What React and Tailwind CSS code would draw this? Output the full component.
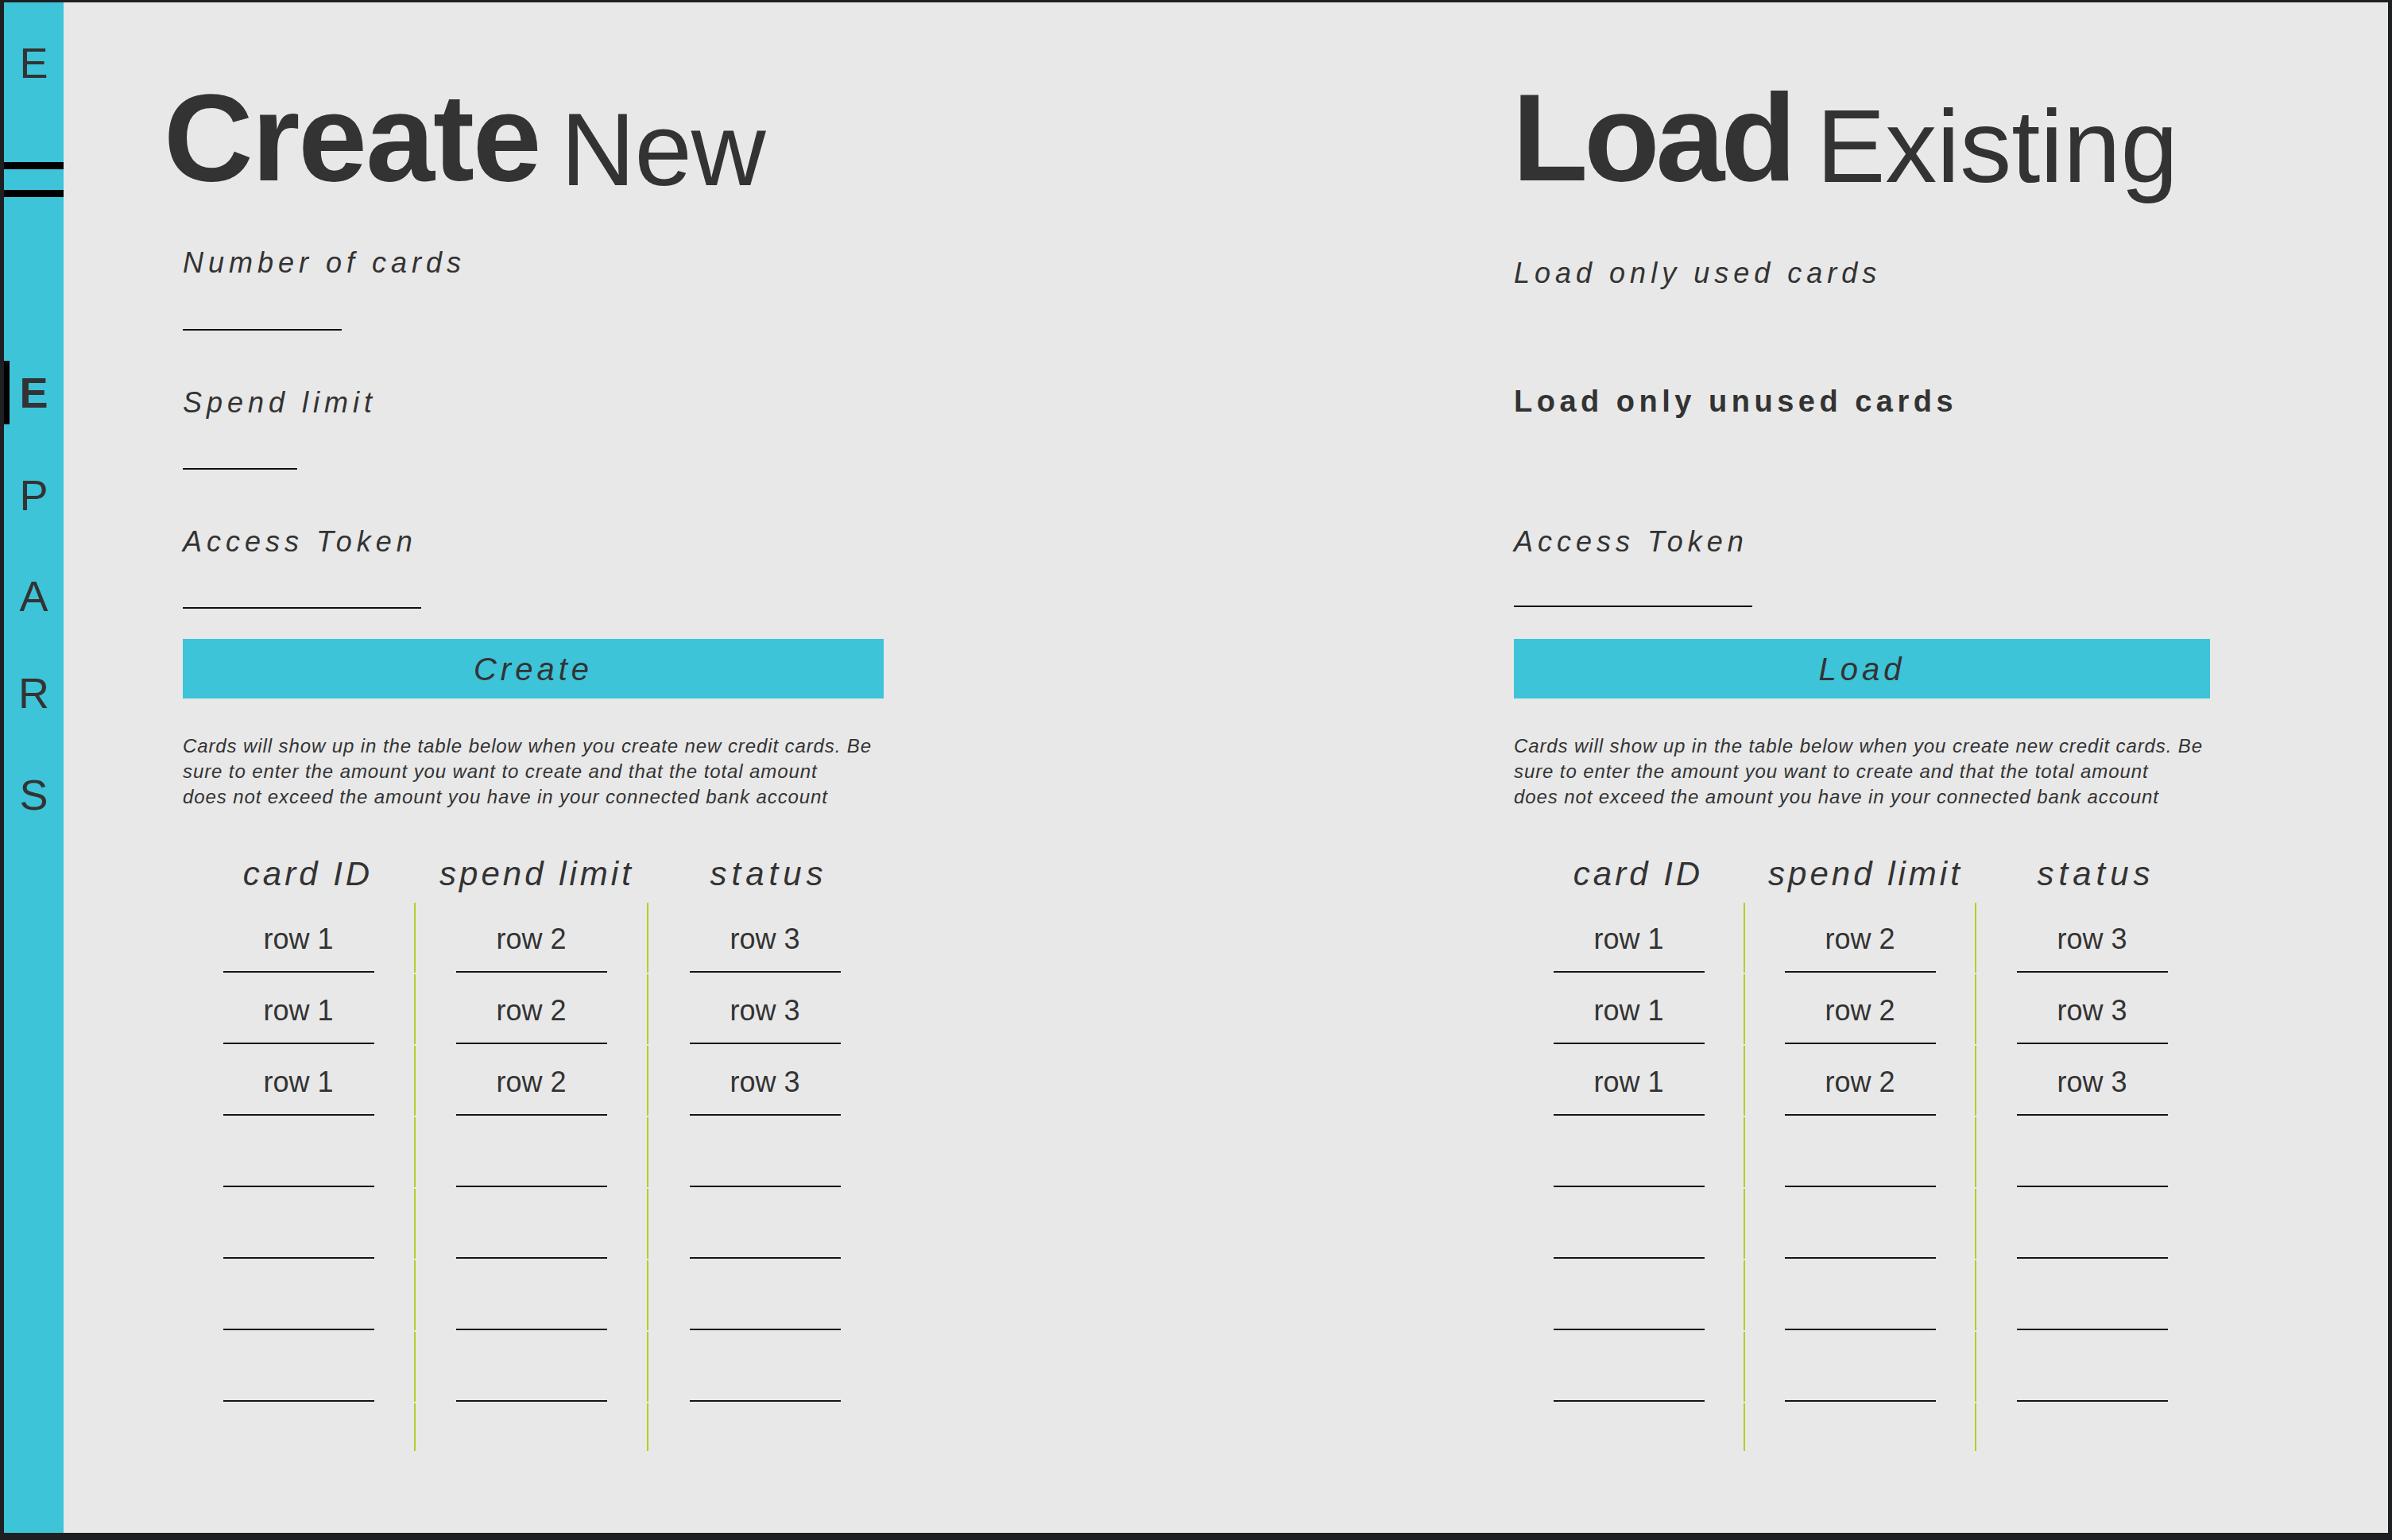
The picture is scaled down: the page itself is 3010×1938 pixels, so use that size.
import React from "react";

const HELP_LINES = [
  "Cards will show up in the table below when you create new credit cards. Be",
  "sure to enter the amount you want to create and that the total amount",
  "does not exceed the amount you have in your connected bank account",
];

const HEADERS = [
  { label: "card ID", cls: "pl-[22px] tracking-[4px]" },
  { label: "spend limit", cls: "pl-[12px] tracking-[4px]" },
  { label: "status", cls: "pl-[10px] tracking-[6px]" },
];

const ROWS = [
  ["row 1", "row 2", "row 3"],
  ["row 1", "row 2", "row 3"],
  ["row 1", "row 2", "row 3"],
  ["", "", ""],
  ["", "", ""],
  ["", "", ""],
  ["", "", ""],
];

function Underline({ className = "" }) {
  return <div className={`h-[2px] bg-[#111] ${className}`} />;
}

function Label({ children, className = "" }) {
  return (
    <p className={`text-[36px] italic leading-[42px] tracking-[6px] text-[#333] ${className}`}>
      {children}
    </p>
  );
}

function ActionButton({ children, className = "" }) {
  return (
    <button
      type="button"
      className={`flex h-[75px] w-full items-center justify-center bg-[#3dc4d9] text-[40px] italic tracking-[5px] text-[#333] ${className}`}
    >
      {children}
    </button>
  );
}

function HelpText() {
  return (
    <p className="mt-[44px] text-[24px] italic leading-[32px] tracking-[0.9px] text-[#333]">
      {HELP_LINES.map((line) => (
        <span key={line} className="block whitespace-nowrap">
          {line}
        </span>
      ))}
    </p>
  );
}

function CardTable({ colClass }) {
  return (
    <div className="mt-[57px] text-[#333]">
      <div className="flex">
        {HEADERS.map((h) => (
          <div
            key={h.label}
            className={`${colClass} ${h.cls} text-center text-[42px] italic leading-[48px]`}
          >
            {h.label}
          </div>
        ))}
      </div>
      <div className="mt-[12px] flex flex-col gap-[2px]">
        {ROWS.map((row, r) => (
          <div key={r} className="flex">
            {row.map((value, i) => (
              <div
                key={i}
                className={`${colClass} flex h-[88px] flex-col items-center ${
                  i < 2 ? "border-r-2 border-[#afd028]" : ""
                }`}
              >
                <span className="pt-[25px] text-[36px] leading-[41px]">{value}</span>
                <div className="mt-auto h-[2px] w-[190px] bg-[#161616]" />
              </div>
            ))}
          </div>
        ))}
        <div className="flex">
          {[0, 1, 2].map((i) => (
            <div
              key={i}
              className={`${colClass} h-[60px] ${i < 2 ? "border-r-2 border-[#afd028]" : ""}`}
            />
          ))}
        </div>
      </div>
    </div>
  );
}

function Sidebar() {
  return (
    <aside className="flex w-[75px] shrink-0 flex-col items-center bg-[#3dc4d9] text-[54px] leading-none text-[#333]">
      <span className="mt-[49px]">E</span>
      <div className="mt-[98px] h-[9px] w-full bg-black" />
      <div className="mt-[26px] h-[9px] w-full bg-black" />
      <div className="relative mt-[206px] flex h-[80px] w-full items-center justify-center">
        <div className="absolute left-0 top-0 h-full w-[7px] bg-black" />
        <span className="font-bold">E</span>
      </div>
      <span className="mt-[62px]">P</span>
      <span className="mt-[73px]">A</span>
      <span className="mt-[68px]">R</span>
      <span className="mt-[74px]">S</span>
    </aside>
  );
}

export default function App() {
  return (
    <div className="h-[1938px] w-[3010px] bg-[#1d1f22] pb-[9px] pl-[5px] pr-[5px] pt-[3px] font-['Liberation_Sans',Arial,sans-serif]">
      <div className="flex h-full">
        <Sidebar />
        <main className="flex flex-1 bg-[#e8e8e8] pt-[92px]">
          {/* Create New */}
          <section className="ml-[150px] flex w-[882px] flex-col">
            <h1 className="-ml-[24px] flex items-end leading-none text-[#333]">
              <span className="pb-[2px] text-[156px] font-bold tracking-[-2px]">Create</span>
              <span className="ml-[26px] text-[130px] tracking-[-1px]">New</span>
            </h1>
            <Label className="mt-[57px]">Number of cards</Label>
            <Underline className="mt-[62px] w-[200px]" />
            <Label className="mt-[70px]">Spend limit</Label>
            <Underline className="mt-[61px] w-[144px]" />
            <Label className="mt-[70px]">Access Token</Label>
            <Underline className="mt-[61px] w-[300px]" />
            <ActionButton className="mt-[38px]">Create</ActionButton>
            <HelpText />
            <CardTable colClass="w-[293px]" />
          </section>

          {/* Load Existing */}
          <section className="ml-[793px] flex w-[876px] flex-col">
            <h1 className="-ml-[2px] flex items-end leading-none text-[#333]">
              <span className="pb-[2px] text-[156px] font-bold tracking-[-5px]">Load</span>
              <span className="mb-[4px] ml-[30px] text-[130px] tracking-[0px]">Existing</span>
            </h1>
            <Label className="mt-[70px]">Load only used cards</Label>
            <p className="mt-[118px] text-[38px] font-bold leading-[44px] tracking-[5.5px] text-[#333]">
              Load only unused cards
            </p>
            <Label className="mt-[134px]">Access Token</Label>
            <Underline className="mt-[59px] w-[300px]" />
            <ActionButton className="mt-[40px]">Load</ActionButton>
            <HelpText />
            <CardTable colClass="w-[291px]" />
          </section>
        </main>
      </div>
    </div>
  );
}
